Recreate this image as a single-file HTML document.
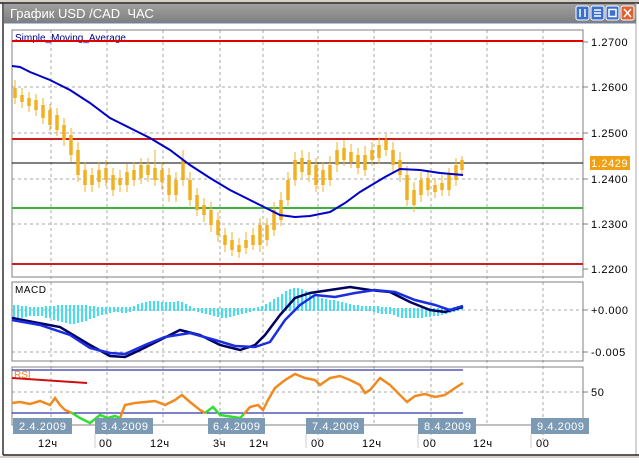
<!DOCTYPE html><html><head><meta charset="utf-8"><style>
body{margin:0;width:639px;height:458px;overflow:hidden;background:#fff;font-family:"Liberation Sans","DejaVu Sans",sans-serif}
</style></head><body>
<svg width="639" height="458" xmlns="http://www.w3.org/2000/svg" font-family="Liberation Sans, DejaVu Sans, sans-serif">
<rect x="0" y="0" width="639" height="458" fill="#fff"/>
<rect x="0" y="0" width="639" height="4" fill="#d4d0c8"/>
<line x1="0" y1="3" x2="639" y2="3" stroke="#222" stroke-width="1.5"/>
<line x1="3" y1="3" x2="3" y2="455" stroke="#333" stroke-width="1.5"/>
<line x1="636" y1="3" x2="636" y2="455" stroke="#aaa"/>
<line x1="3" y1="455" x2="639" y2="455" stroke="#222" stroke-width="1.5"/>
<rect x="0" y="456" width="639" height="2" fill="#d4d0c8"/>
<defs><linearGradient id="tb" x1="0" y1="0" x2="0" y2="1"><stop offset="0" stop-color="#a0a0a0"/><stop offset="1" stop-color="#7e7e7e"/></linearGradient></defs>
<rect x="4" y="4" width="632" height="19" fill="url(#tb)"/>
<line x1="4" y1="23" x2="636" y2="23" stroke="#6d85a8"/>
<text x="10" y="18" font-size="13" fill="#fff" xml:space="preserve">График USD /CAD  ЧАС</text>
<g stroke="#fff" stroke-width="1">
<rect x="576" y="6" width="13" height="14" rx="2" fill="#3a6fd0"/><rect x="591" y="6" width="13" height="14" rx="2" fill="#3a6fd0"/><rect x="606" y="6" width="13" height="14" rx="2" fill="#3a6fd0"/><rect x="621" y="6" width="13" height="14" rx="2" fill="#e06030"/>
</g>
<g stroke="#fff" stroke-width="1.5" fill="none"><path d="M580 9V17M585 9V17"/><path d="M594 10H601M594 13H601M594 16H601"/><rect x="609" y="9.5" width="7" height="7"/><path d="M624 9L631 17M631 9L624 17"/></g>
<g stroke="#aaa" stroke-dasharray="3,3" stroke-width="1">
<path d="M51 30V425M107 30V440M163 30V425M220 30V440M263 30V425M318 30V440M374 30V425M431 30V440M487 30V425M543 30V440"/>
<path d="M12 87H583M12 133H583M12 179H583M12 224H583M12 310H583M12 352H583M12 392H583"/>
</g>
<g fill="none" stroke="#808080"><rect x="12" y="30" width="571" height="247"/><rect x="12" y="282" width="571" height="79"/><rect x="12" y="367" width="571" height="58"/></g>
<g stroke="#808080"><path d="M583 42h5M583 87h5M583 133h5M583 179h5M583 224h5M583 269h5M583 310h5M583 352h5M583 392h5"/></g>
<g font-size="11" fill="#000" letter-spacing="0.6"><text x="591" y="46">1.2700</text><text x="591" y="91">1.2600</text><text x="591" y="137">1.2500</text><text x="591" y="183">1.2400</text><text x="591" y="228">1.2300</text><text x="591" y="273">1.2200</text><text x="591" y="314">+0.000</text><text x="591" y="356">-0.005</text><text x="591" y="396">50</text></g>
<rect x="590" y="156" width="40" height="14" fill="#f0a010"/><text x="591" y="167" font-size="11" fill="#fff" letter-spacing="0.6">1.2429</text>
<text x="15" y="41" font-size="10" fill="#00008b">Simple_Moving_Average</text>
<g stroke-width="2"><line x1="12" y1="41" x2="583" y2="41" stroke="#e00000"/><line x1="12" y1="139" x2="583" y2="139" stroke="#cc2020"/><line x1="12" y1="264" x2="583" y2="264" stroke="#cc2020"/><line x1="12" y1="208" x2="583" y2="208" stroke="#40b040"/></g>
<line x1="12" y1="163" x2="583" y2="163" stroke="#000"/>
<path stroke="#f0b020" stroke-width="1" fill="none" d="M15 80V104M22 88V108M29 92V112M36 94V116M43 98V124M50 104V131M57 108V136M64 118V146M71 128V162M78 142V182M85 162V192M92 168V192M99 162V188M106 160V186M113 168V196M120 170V192M127 164V192M134 162V186M141 158V184M148 158V182M155 150V186M162 162V190M169 168V202M176 172V202M183 150V186M190 172V206M197 188V216M204 198V222M211 202V232M218 212V242M225 228V252M232 232V256M239 238V258M246 232V254M253 228V250M260 218V252M267 218V246M274 202V236M281 192V226M288 172V206M295 152V186M302 150V178M309 152V182M316 158V192M323 162V192M330 156V186M337 142V172M344 140V166M351 144V168M358 148V174M365 146V176M372 142V166M379 137V164M386 134V156M393 142V172M400 152V182M407 166V206M414 182V212M421 172V202M428 170V196M435 178V198M442 175V196M449 168V196M456 158V186M462 156V176"/>
<path stroke="#f0b020" stroke-width="3.5" fill="none" d="M15 88V98M22 95V102M29 98V106M36 100V110M43 105V118M50 110V125M57 115V130M64 125V140M71 135V155M78 150V175M85 170V185M92 175V185M99 170V182M106 168V180M113 175V190M120 178V185M127 172V185M134 170V180M141 165V178M148 165V175M155 168V180M162 170V182M169 175V195M176 180V195M183 160V180M190 180V200M197 195V210M204 205V215M211 210V225M218 220V235M225 235V245M232 240V250M239 245V252M246 240V248M253 235V245M260 225V245M267 225V240M274 210V230M281 200V220M288 180V200M295 160V180M302 158V172M309 160V175M316 165V185M323 170V185M330 165V180M337 150V165M344 148V160M351 152V162M358 155V168M365 155V170M372 150V160M379 145V158M386 140V150M393 150V165M400 160V175M407 175V200M414 190V205M421 180V195M428 178V190M435 185V192M442 183V190M449 175V190M456 165V180M462 160V170"/>
<polyline fill="none" stroke="#0000c8" stroke-width="2" points="12,66 20,67 30,72 50,80 70,90 90,103 110,118 130,128 150,138 170,150 190,165 210,178 230,190 250,200 270,210 280,215 295,217 310,216 330,212 345,203 360,192 375,183 385,177 400,169 420,170 440,173 463,175"/>
<text x="15" y="293" font-size="10" fill="#000" letter-spacing="0.5">MACD</text>
<path stroke="#40e0f0" stroke-width="2" fill="none" d="M14 305V320M18 305V318M22 306V318M26 306V317M30 307V316M34 307V316M38 307V316M42 307V316M46 306V318M50 306V318M54 306V320M58 305V321M62 305V322M66 305V323M70 305V324M74 305V324M78 305V323M82 305V322M86 305V321M90 306V319M94 306V318M98 307V316M102 307V315M106 307V314M110 307V313M114 307V312M118 307V312M122 307V313M126 307V313M130 307V312M134 306V311M138 304V311M142 303V311M146 302V311M150 301V311M154 301V311M158 301V311M162 302V311M166 302V311M170 302V311M174 302V311M178 301V311M182 302V311M186 304V311M190 306V311M194 308V311M198 308V312M202 308V313M206 308V314M210 308V315M214 308V316M218 308V317M222 308V318M226 308V318M230 308V317M234 308V316M238 308V315M242 308V314M246 308V313M250 308V312M254 308V311M258 307V311M262 306V311M266 304V311M270 302V311M274 299V311M278 297V311M282 294V311M286 291V311M290 289V311M294 288V311M298 288V311M302 289V311M306 291V311M310 293V311M314 295V311M318 297V311M322 298V311M326 299V311M330 300V311M334 300V311M338 301V311M342 302V311M346 303V311M350 304V311M354 305V311M358 305V311M362 306V311M366 306V311M370 306V311M374 306V312M378 306V313M382 307V314M386 307V314M390 307V314M394 308V315M398 308V317M402 308V318M406 308V318M410 308V318M414 308V318M418 308V318M422 308V318M426 308V317M430 308V317M434 308V316M438 308V316M442 308V315M446 308V314M450 308V313M454 307V312M458 306V311M462 305V310"/>
<polyline fill="none" stroke="#000060" stroke-width="2.5" points="12,318 60,327 90,345 110,356 125,357 140,350 160,340 180,330 200,335 220,345 240,350 255,345 265,335 280,315 295,298 310,293 330,290 350,287 370,290 390,292 410,302 430,310 445,312 463,307"/>
<polyline fill="none" stroke="#1a2ee0" stroke-width="2.5" points="12,320 40,325 70,335 90,348 110,353 125,354 145,345 165,337 190,333 215,340 235,346 255,347 270,342 285,320 300,305 315,295 335,297 355,293 375,290 395,292 415,300 435,305 450,310 463,306"/>
<g stroke="#000090"><line x1="12" y1="370" x2="463" y2="370"/><line x1="12" y1="413" x2="463" y2="413"/></g>
<text x="14" y="378" font-size="10" fill="#f08020">RSI</text>
<line x1="12" y1="378" x2="87" y2="383" stroke="#d01010" stroke-width="2"/>
<polyline fill="none" stroke="#f08a20" stroke-width="2.5" points="12,403 20,402 30,404 40,401 50,405 55,398 60,405 65,410 72,413"/>
<polyline fill="none" stroke="#30e030" stroke-width="2.5" points="72,413 80,418 90,423 100,415 108,418 115,416 120,418"/>
<polyline fill="none" stroke="#f08a20" stroke-width="2.5" points="120,418 125,405 135,403 145,402 155,401 165,405 175,400 182,395 190,402 200,410 205,413"/>
<polyline fill="none" stroke="#30e030" stroke-width="2.5" points="205,413 213,407 220,415 240,418 244,414"/>
<polyline fill="none" stroke="#f08a20" stroke-width="2.5" points="244,414 250,407 258,405 263,410 268,400 275,388 285,380 295,374 305,378 315,380 320,385 330,378 340,376 350,380 360,385 365,393 370,390 380,378 390,385 400,395 407,402 415,396 425,394 435,397 445,395 455,388 463,383"/>
<g fill="#7d9ab5"><rect x="13" y="418" width="59" height="16"/><rect x="95" y="418" width="58" height="16"/><rect x="208" y="418" width="57" height="16"/><rect x="306" y="418" width="58" height="16"/><rect x="418" y="418" width="58" height="16"/><rect x="531" y="418" width="58" height="16"/></g>
<g font-size="11" fill="#fff" letter-spacing="0.6"><text x="19" y="430">2.4.2009</text><text x="101" y="430">3.4.2009</text><text x="213" y="430">6.4.2009</text><text x="312" y="430">7.4.2009</text><text x="424" y="430">8.4.2009</text><text x="537" y="430">9.4.2009</text></g>
<g stroke="#ccc"><path d="M95 434V448M306 434V448M418 434V448M531 434V448"/></g>
<g font-size="11" fill="#000" letter-spacing="0.6"><text x="38" y="447">12ч</text><text x="99" y="447">00</text><text x="150" y="447">12ч</text><text x="213" y="447">3ч</text><text x="249" y="447">12ч</text><text x="311" y="447">00</text><text x="362" y="447">12ч</text><text x="423" y="447">00</text><text x="473" y="447">12ч</text><text x="536" y="447">00</text></g>
</svg>
</body></html>
